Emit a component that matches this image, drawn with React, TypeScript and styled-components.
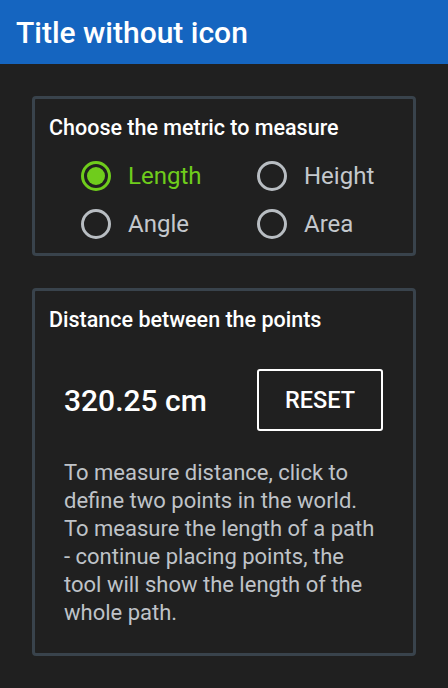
import React, { useState } from "react";
import styled, { createGlobalStyle } from "styled-components";

const GlobalStyle = createGlobalStyle`
  html, body {
    margin: 0;
    padding: 0;
    background: #202020;
  }
  body {
    font-family: Roboto, "Noto Sans", sans-serif;
  }
`;

const Panel = styled.section`
  width: 448px;
  height: 688px;
  background: #202020;
  display: flex;
  flex-direction: column;
`;

const Header = styled.header`
  height: 64px;
  background: #1565c0;
  display: flex;
  align-items: center;
  padding: 0 16px;
  box-sizing: border-box;
`;

const Title = styled.h1`
  margin: 0;
  font-size: 30px;
  font-weight: 500;
  color: #ffffff;
`;

const Body = styled.div`
  display: flex;
  flex-direction: column;
  gap: 32px;
  padding: 32px;
`;

const Card = styled.div<{ $height: number }>`
  height: ${(p) => p.$height}px;
  border: 3px solid #39434c;
  border-radius: 4px;
  box-sizing: border-box;
  padding: 15px 14px 0 14px;
  display: flex;
  flex-direction: column;
`;

const CardTitle = styled.div`
  font-size: 21.5px;
  font-weight: 500;
  color: #ffffff;
  line-height: 28px;
`;

const RadioGrid = styled.div`
  display: grid;
  grid-template-columns: 176px 176px;
  grid-auto-rows: 48px;
  padding: 10px 0 0 32px;
`;

const RadioItem = styled.label<{ $checked: boolean }>`
  display: flex;
  align-items: center;
  gap: 17px;
  font-size: 24px;
  color: ${(p) => (p.$checked ? "#6fcc1c" : "#c4c8cd")};
  cursor: pointer;
`;

const RadioCircle = styled.span<{ $checked: boolean }>`
  width: 30px;
  height: 30px;
  border-radius: 50%;
  box-sizing: border-box;
  border: 3px solid ${(p) => (p.$checked ? "#6fcc1c" : "#b8bdc2")};
  display: flex;
  align-items: center;
  justify-content: center;
  &::after {
    content: "";
    width: 18px;
    height: 18px;
    border-radius: 50%;
    background: #6fcc1c;
    display: ${(p) => (p.$checked ? "block" : "none")};
  }
`;

const ResultRow = styled.div`
  display: flex;
  align-items: center;
  justify-content: space-between;
  padding: 35px 16px 0 15px;
`;

const Value = styled.div`
  font-size: 30px;
  font-weight: 500;
  color: #ffffff;
`;

const ResetButton = styled.button`
  width: 126px;
  height: 62px;
  background: transparent;
  border: 2px solid #ffffff;
  border-radius: 3px;
  color: #ffffff;
  font-family: Roboto, sans-serif;
  font-size: 23.5px;
  font-weight: 500;
  cursor: pointer;
`;

const Description = styled.p`
  margin: 28px 0 0 0;
  padding: 0 15px;
  width: 314px;
  font-size: 22px;
  line-height: 28px;
  color: #bfc3c8;
`;

const metrics = ["Length", "Height", "Angle", "Area"];

export default function App() {
  const [metric, setMetric] = useState("Length");
  return (
    <>
      <GlobalStyle />
      <Panel>
        <Header>
          <Title>Title without icon</Title>
        </Header>
        <Body>
          <Card $height={160}>
            <CardTitle>Choose the metric to measure</CardTitle>
            <RadioGrid>
              {metrics.map((m) => (
                <RadioItem key={m} $checked={m === metric} onClick={() => setMetric(m)}>
                  <RadioCircle $checked={m === metric} />
                  {m}
                </RadioItem>
              ))}
            </RadioGrid>
          </Card>
          <Card $height={368}>
            <CardTitle>Distance between the points</CardTitle>
            <ResultRow>
              <Value>320.25 cm</Value>
              <ResetButton>RESET</ResetButton>
            </ResultRow>
            <Description>
              To measure distance, click to define two points in the world. To measure the length of a path - continue placing points, the tool will show the length of the whole path.
            </Description>
          </Card>
        </Body>
      </Panel>
    </>
  );
}
